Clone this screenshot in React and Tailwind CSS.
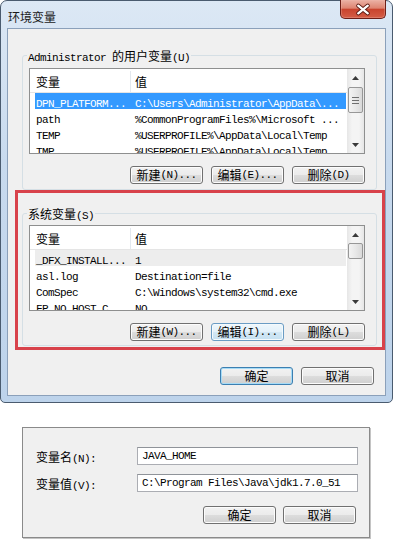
import React from "react"

const cjk = "font-['Noto_Sans_CJK_SC',sans-serif] text-[12px]"
const mono = "font-['Liberation_Mono',monospace] text-[11px] tracking-[-0.6px]"

// split a label into CJK and latin runs so each gets its own font
const Txt = ({ children }) => {
  const parts = String(children).split(/([\u4e00-\u9fff]+)/).filter(Boolean)
  return (
    <>
      {parts.map((p, i) =>
        /[\u4e00-\u9fff]/.test(p) ? (
          <span key={i} className={cjk}>
            {p}
          </span>
        ) : (
          <span key={i} className={mono}>
            {p}
          </span>
        )
      )}
    </>
  )
}

const Button = ({ label, variant }) => {
  const look =
    variant === "default"
      ? "border-[#3c7fb1] shadow-[inset_0_0_0_1px_#a6dbf6] bg-[linear-gradient(to_bottom,#f2f2f2_0%,#ebebeb_50%,#dddddd_50%,#cfcfcf_100%)]"
      : variant === "hover"
        ? "border-[#6a9cc4] shadow-[inset_0_0_0_1px_#f4fafd] bg-[linear-gradient(to_bottom,#eef7fc_0%,#e3f1fa_50%,#d3e8f5_50%,#c5e0f1_100%)]"
        : "border-[#707070] shadow-[inset_0_0_0_1px_#fcfcfc] bg-[linear-gradient(to_bottom,#f2f2f2_0%,#ebebeb_50%,#dddddd_50%,#cfcfcf_100%)]"
  return (
    <div
      className={`w-[73px] h-[18px] rounded-[3px] border flex items-center justify-center whitespace-pre leading-none text-black ${look}`}
    >
      <Txt>{label}</Txt>
    </div>
  )
}

const Arrow = ({ up }) => (
  <svg width="7" height="4" viewBox="0 0 7 4">
    <path d={up ? "M0 4L3.5 0L7 4Z" : "M0 0L3.5 4L7 0Z"} fill="#3a3a3a" />
  </svg>
)

const ScrollBar = ({ thumb, grip }) => (
  <div className="w-[17px] h-full shrink-0 flex flex-col bg-[linear-gradient(to_right,#e6e6e6,#f4f4f4_30%,#f4f4f4_70%,#e6e6e6)]">
    <div className="h-[17px] shrink-0 flex items-center justify-center">
      <Arrow up />
    </div>
    <div className="flex-1 flex flex-col">
      <div
        className={`mx-[1px] rounded-[2px] border border-[#979797] bg-[linear-gradient(to_right,#f3f3f3,#e8e8e8_50%,#d9d9d9)] flex flex-col items-center justify-center gap-[2px] ${thumb}`}
      >
        {grip && (
          <>
            <div className="w-[7px] h-[1px] bg-[#6f6f6f]" />
            <div className="w-[7px] h-[1px] bg-[#6f6f6f]" />
            <div className="w-[7px] h-[1px] bg-[#6f6f6f]" />
          </>
        )}
      </div>
    </div>
    <div className="h-[17px] shrink-0 flex items-center justify-center">
      <Arrow />
    </div>
  </div>
)

const ListView = ({ rows, thumb, grip }) => (
  <div className="w-[336px] h-[86px] border border-[#8e8f8f] bg-white flex">
    <div className="flex-1 min-w-0 flex flex-col overflow-hidden">
      <div className="h-[24px] shrink-0 flex border-b border-[#e5e5e5] pt-[2px]">
        <div className="w-[101px] flex items-center pl-[6px] border-r border-[#e3e8ee]">
          <Txt>变量</Txt>
        </div>
        <div className="flex items-center pl-[4px]">
          <Txt>值</Txt>
        </div>
      </div>
      {rows.map((r, i) => (
        <div
          key={i}
          className={`h-[16px] shrink-0 ml-[5px] mr-[1px] flex items-center whitespace-pre leading-none ${
            r.sel ? "bg-[#3399ff] text-white" : r.focus ? "bg-[#ededed] text-black" : "text-black"
          }`}
        >
          <div className="w-[95px] pl-[1px] overflow-hidden">
            <Txt>{r.name}</Txt>
          </div>
          <div className="pl-[5px]">
            <Txt>{r.value}</Txt>
          </div>
        </div>
      ))}
    </div>
    <ScrollBar thumb={thumb} grip={grip} />
  </div>
)

const userRows = [
  { name: "DPN_PLATFORM...", value: "C:\\Users\\Administrator\\AppData\\...", sel: true },
  { name: "path", value: "%CommonProgramFiles%\\Microsoft ..." },
  { name: "TEMP", value: "%USERPROFILE%\\AppData\\Local\\Temp" },
  { name: "TMP", value: "%USERPROFILE%\\AppData\\Local\\Temp" },
]

const sysRows = [
  { name: "_DFX_INSTALL...", value: "1", focus: true },
  { name: "asl.log", value: "Destination=file" },
  { name: "ComSpec", value: "C:\\Windows\\system32\\cmd.exe" },
  { name: "FP_NO_HOST_C...", value: "NO" },
]

const CloseButton = () => (
  <div className="-mt-[1px] w-[46px] h-[19px] rounded-b-[5px] border border-t-0 border-[#6d1f18] bg-[linear-gradient(to_bottom,#ebb2a5_0%,#de8471_45%,#c9442e_52%,#d45d46_100%)] shadow-[inset_0_0_0_1px_#f0b8ab55] flex items-center justify-center">
    <svg width="46" height="19" viewBox="0 0 46 19">
      <path d="M18 5.5L28 13.5M28 5.5L18 13.5" stroke="#5a1a12" strokeWidth="4.2" strokeLinecap="round" />
      <path d="M18 5.5L28 13.5M28 5.5L18 13.5" stroke="#ffffff" strokeWidth="2.4" strokeLinecap="round" />
    </svg>
  </div>
)

export default function App() {
  return (
    <div className="w-[394px] h-[545px] bg-white overflow-hidden text-black leading-none">
      {/* main window */}
      <div className="w-[393px] h-[403px] rounded-t-[7px] rounded-b-[5px] border border-[#4a5b6f] bg-[linear-gradient(to_bottom,#dce8f5,#c8daee_40%,#bdd3eb)] px-[6px] pb-[6px] flex flex-col">
        <div className="h-[27px] shrink-0 flex items-start justify-between">
          <div className="pt-[7px] pl-[1px] text-[#1a1a1a]">
            <Txt>环境变量</Txt>
          </div>
          <CloseButton />
        </div>

        <div className="flex-1 border border-[#8ba0ba] bg-[#f0f0f0] flex flex-col">
          {/* user variables */}
          <div className="ml-[14px] mt-[26px] w-[355px] border border-[#d5dfe5] rounded-[3px] relative pt-[12px] pl-[6px] pb-[5px]">
            <div className="absolute left-[4px] -top-[8px] px-[1px] bg-[#f0f0f0] whitespace-pre leading-[14px]">
              <Txt>Administrator 的用户变量(U)</Txt>
            </div>
            <ListView rows={userRows} thumb="mt-[1px] h-[26px]" grip />
            <div className="w-[336px] mt-[12px] flex justify-end gap-[8px]">
              <Button label="新建(N)..." />
              <Button label="编辑(E)..." />
              <Button label="删除(D)" />
            </div>
          </div>

          {/* system variables, outlined in red */}
          <div className="ml-[7px] w-[370px] border-[3px] border-[#d8424b] pb-[1px]">
            <div className="ml-[4px] mt-[20px] w-[355px] border border-[#d5dfe5] rounded-[3px] relative pt-[11px] pl-[6px] pb-[4px]">
              <div className="absolute left-[4px] -top-[8px] px-[1px] bg-[#f0f0f0] whitespace-pre leading-[14px]">
                <Txt>系统变量(S)</Txt>
              </div>
              <ListView rows={sysRows} thumb="h-[16px]" />
              <div className="w-[336px] mt-[12px] flex justify-end gap-[8px]">
                <Button label="新建(W)..." />
                <Button label="编辑(I)..." variant="hover" />
                <Button label="删除(L)" />
              </div>
            </div>
          </div>

          <div className="mt-[17px] pr-[11px] flex justify-end gap-[8px]">
            <Button label="确定" variant="default" />
            <Button label="取消" />
          </div>
        </div>
      </div>

      {/* edit variable dialog */}
      <div className="ml-[22px] mt-[24px] w-[348px] h-[111px] border border-[#8a8a8a] bg-[#f0f0f0] shadow-[1px_1px_0_#c4c4c4] pt-[19px] flex flex-col">
        <div className="flex items-center h-[18px]">
          <div className="w-[114px] pl-[13px] whitespace-pre">
            <Txt>变量名(N):</Txt>
          </div>
          <div className="w-[221px] h-[18px] border border-[#abadb3] border-t-[#8f9399] bg-white flex items-center pl-[4px] whitespace-pre">
            <Txt>JAVA_HOME</Txt>
          </div>
        </div>
        <div className="mt-[9px] flex items-center h-[18px]">
          <div className="w-[114px] pl-[13px] whitespace-pre">
            <Txt>变量值(V):</Txt>
          </div>
          <div className="w-[221px] h-[18px] border border-[#abadb3] border-t-[#8f9399] bg-white flex items-center pl-[4px] whitespace-pre">
            <Txt>C:\Program Files\Java\jdk1.7.0_51</Txt>
          </div>
        </div>
        <div className="mt-[14px] pr-[13px] flex justify-end gap-[7px]">
          <Button label="确定" />
          <Button label="取消" />
        </div>
      </div>
    </div>
  )
}
